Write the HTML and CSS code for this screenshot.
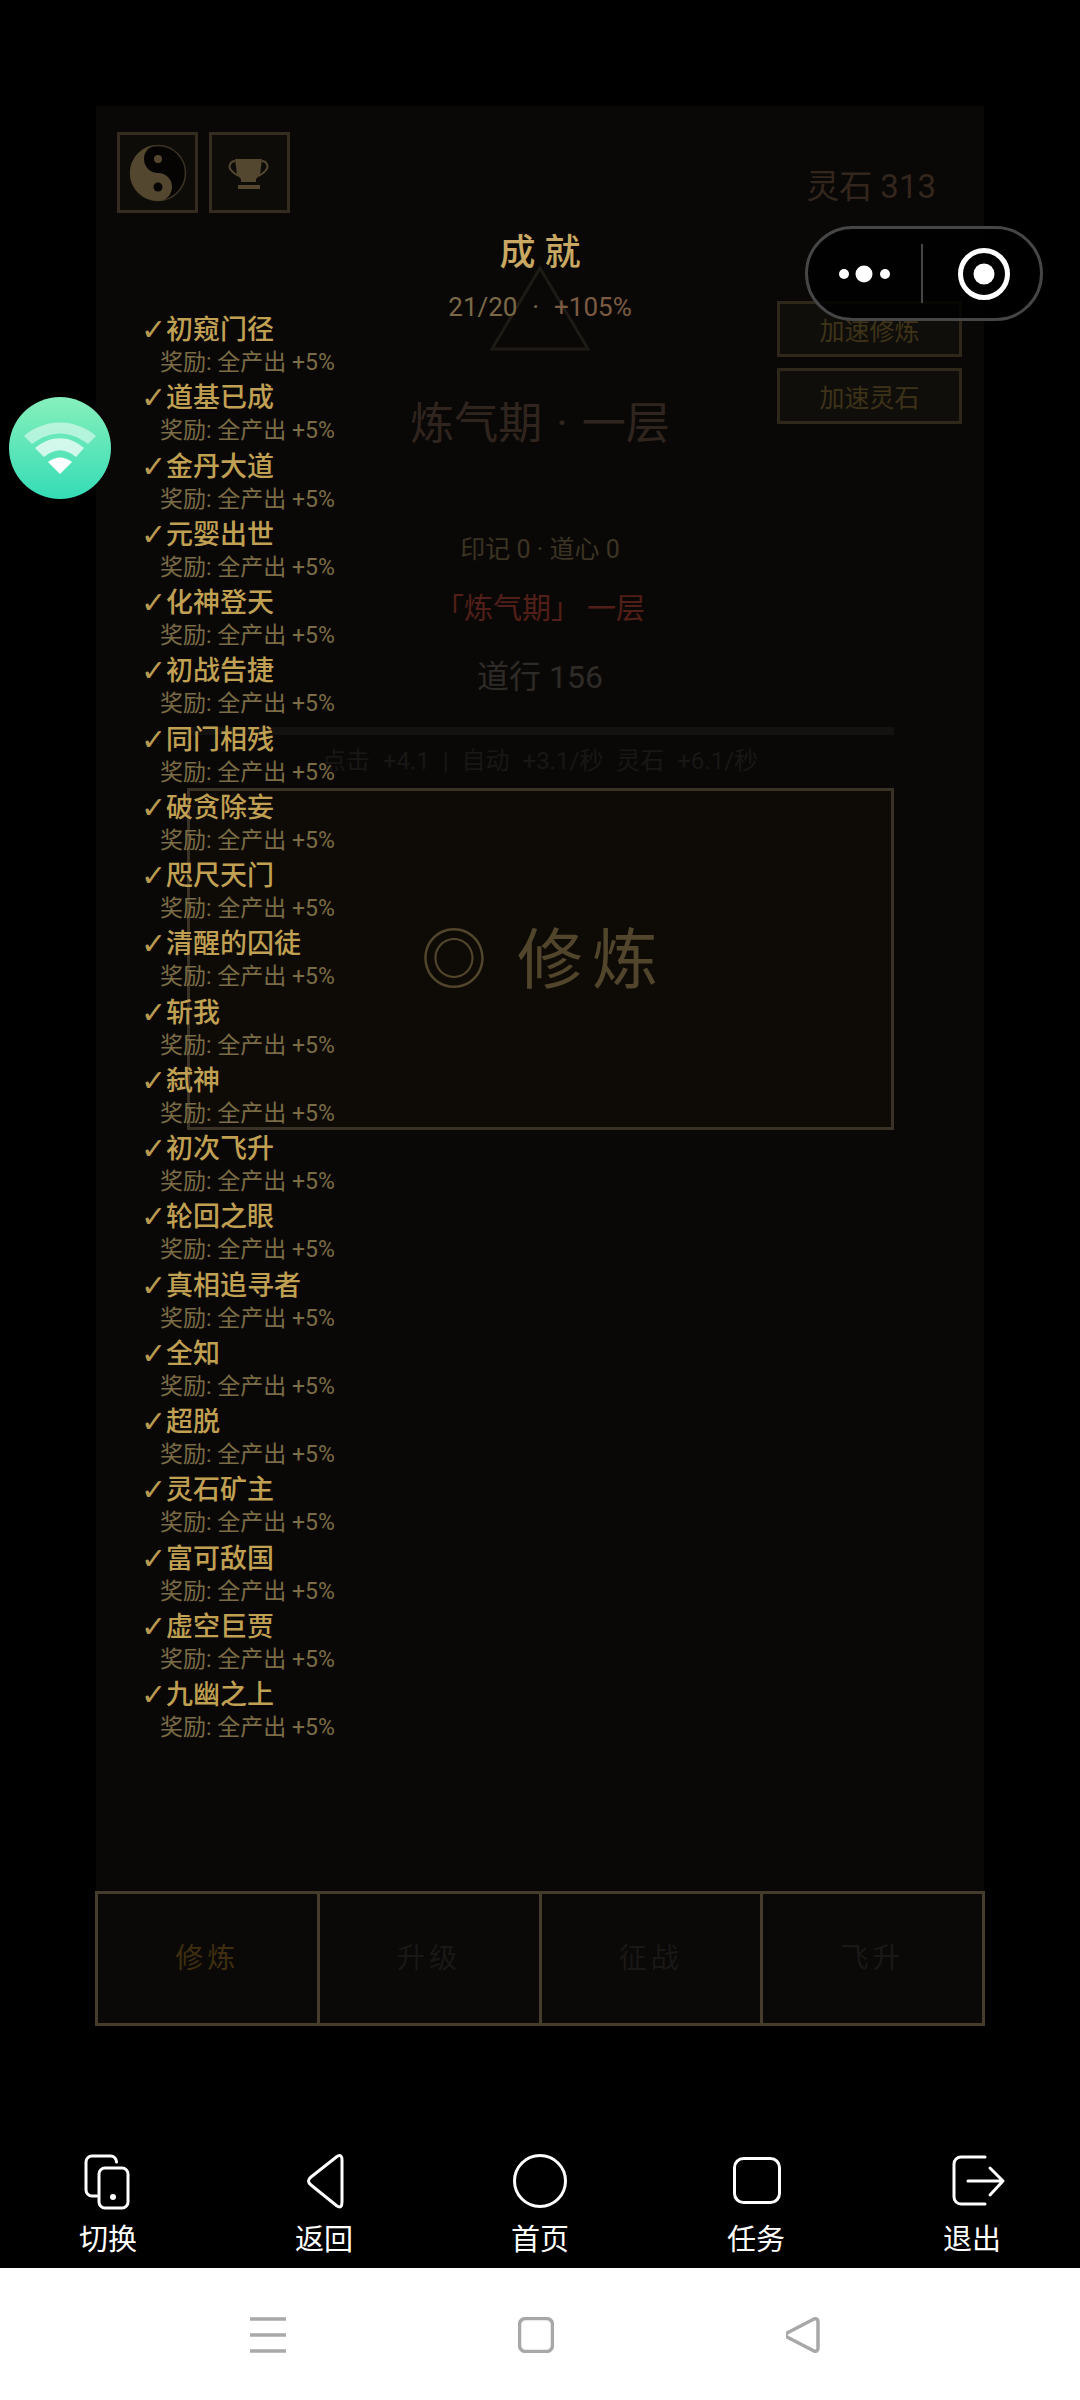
FILE: index.html
```html
<!DOCTYPE html>
<html lang="zh">
<head>
<meta charset="utf-8">
<title>修炼</title>
<link rel="stylesheet" href="styles.css">
</head>
<body>
<div class="screen">
  <main class="game">
    <section class="panel">
      <header class="topbar">
        <div class="tools">
          <div class="tool">
            <svg width="60" height="60" viewBox="-30 -30 60 60"><circle r="27.5" class="yy-ring"/><path class="yy-light" d="M0-28A28 28 0 0 0 0 28A14 14 0 0 0 0 0A14 14 0 0 1 0-28Z"/><circle cy="-14" r="4" class="yy-dot"/><circle cy="14" r="4.500" class="yy-hole"/></svg>
          </div>
          <div class="tool">
            <svg width="60" height="60" viewBox="0 0 60 60"><path class="cup-line" d="M15 18C10 18 8 24 11 27 13 30 16 31 18 33M42 18C47 18 49 24 46 27 44 30 41 31 39 33"/><path class="cup" d="M15 16H42L40 32 36 36V39H21V36L17 32Z"/><rect class="cup" x="18" y="42" width="22" height="4"/></svg>
          </div>
        </div>
        <div class="stone">灵石 313</div>
      </header>
      <div class="stage">
        <div class="hero">
          <svg class="tri" width="100" height="86" viewBox="0 0 100 86"><path d="M50 3 98 84H2Z"/></svg>
          <h1 class="realm">炼气期 · 一层</h1>
          <p class="marks">印记 0 · 道心 0</p>
          <p class="rank">「炼气期」 一层</p>
          <p class="dao">道行 156</p>
          <div class="bar"></div>
          <p class="rates">点击 +4.1 | 自动 +3.1/秒 灵石 +6.1/秒</p>
          <div class="cultivate"><span class="ring">◎</span><span>修炼</span></div>
        </div>
        <div class="boosts">
          <div class="boost">加速修炼</div>
          <div class="boost">加速灵石</div>
        </div>
      </div>
      <nav class="tabs">
        <div class="tab on">修炼</div>
        <div class="tab">升级</div>
        <div class="tab">征战</div>
        <div class="tab">飞升</div>
      </nav>
      <aside class="modal">
        <h2 class="m-title">成就</h2>
        <p class="m-sum"><span class="m-count">21/20</span>&nbsp; · &nbsp;<span class="m-plus">+105%</span></p>
        <ul class="ach">
          <li><b><i>✓</i>初窥门径</b><span>奖励: 全产出 +5%</span></li>
          <li><b><i>✓</i>道基已成</b><span>奖励: 全产出 +5%</span></li>
          <li><b><i>✓</i>金丹大道</b><span>奖励: 全产出 +5%</span></li>
          <li><b><i>✓</i>元婴出世</b><span>奖励: 全产出 +5%</span></li>
          <li><b><i>✓</i>化神登天</b><span>奖励: 全产出 +5%</span></li>
          <li><b><i>✓</i>初战告捷</b><span>奖励: 全产出 +5%</span></li>
          <li><b><i>✓</i>同门相残</b><span>奖励: 全产出 +5%</span></li>
          <li><b><i>✓</i>破贪除妄</b><span>奖励: 全产出 +5%</span></li>
          <li><b><i>✓</i>咫尺天门</b><span>奖励: 全产出 +5%</span></li>
          <li><b><i>✓</i>清醒的囚徒</b><span>奖励: 全产出 +5%</span></li>
          <li><b><i>✓</i>斩我</b><span>奖励: 全产出 +5%</span></li>
          <li><b><i>✓</i>弑神</b><span>奖励: 全产出 +5%</span></li>
          <li><b><i>✓</i>初次飞升</b><span>奖励: 全产出 +5%</span></li>
          <li><b><i>✓</i>轮回之眼</b><span>奖励: 全产出 +5%</span></li>
          <li><b><i>✓</i>真相追寻者</b><span>奖励: 全产出 +5%</span></li>
          <li><b><i>✓</i>全知</b><span>奖励: 全产出 +5%</span></li>
          <li><b><i>✓</i>超脱</b><span>奖励: 全产出 +5%</span></li>
          <li><b><i>✓</i>灵石矿主</b><span>奖励: 全产出 +5%</span></li>
          <li><b><i>✓</i>富可敌国</b><span>奖励: 全产出 +5%</span></li>
          <li><b><i>✓</i>虚空巨贾</b><span>奖励: 全产出 +5%</span></li>
          <li><b><i>✓</i>九幽之上</b><span>奖励: 全产出 +5%</span></li>
        </ul>
      </aside>
    </section>
    <div class="capsule">
      <svg width="238" height="95" viewBox="0 0 238 95"><rect x="1.500" y="1.500" width="235" height="92" rx="46" class="cap-shape"/><path class="cap-div" d="M117 18v59"/><circle cx="39" cy="48" r="5" class="cap-dot"/><circle cx="59" cy="48" r="8.500" class="cap-dot"/><circle cx="80" cy="48" r="5" class="cap-dot"/><circle cx="179" cy="48" r="23.500" class="cap-ring"/><circle cx="179" cy="48" r="10.500" class="cap-dot"/></svg>
    </div>
    <div class="wifi">
      <svg width="102" height="102" viewBox="0 0 102 102"><defs><linearGradient id="wg" x1="0" y1="0" x2="0" y2="1"><stop offset="0" stop-color="#86f0bb"/><stop offset="1" stop-color="#35dcb6"/></linearGradient></defs><circle cx="51" cy="51" r="51" fill="url(#wg)"/><path class="w1" d="M15 39C36 21 66 21 87 39L79 47C60 33 42 33 23 47Z"/><path class="w2" d="M26 51C42 38 60 38 75 51L67 60C56 51 46 51 35 60Z"/><path class="w3" d="M39 65C47 59 55 59 63 65L51 77Z"/></svg>
    </div>
  </main>
  <footer class="dock">
    <div class="dock-item">
      <svg width="60" height="60" viewBox="0 0 60 60"><path class="ic" d="M38.500 10V10a6 6 0 0 0-6-6H14a6 6 0 0 0-6 6v28a6 6 0 0 0 6 6h5"/><rect class="ic" x="21" y="16" width="29" height="40" rx="6"/><circle cx="35" cy="45" r="3" class="ic-fill"/></svg>
      <span>切换</span>
    </div>
    <div class="dock-item">
      <svg width="60" height="60" viewBox="0 0 60 60"><path class="ic" d="M43 4.500Q48 1.500 48 8V50Q48 57 43 54L17 33Q12 29 17 25Z"/></svg>
      <span>返回</span>
    </div>
    <div class="dock-item">
      <svg width="60" height="60" viewBox="0 0 60 60"><circle class="ic" cx="30" cy="29" r="25.500"/></svg>
      <span>首页</span>
    </div>
    <div class="dock-item">
      <svg width="60" height="60" viewBox="0 0 60 60"><rect class="ic" x="8.500" y="6.500" width="45" height="44" rx="9"/></svg>
      <span>任务</span>
    </div>
    <div class="dock-item">
      <svg class="dock-exit" width="60" height="60" viewBox="0 0 60 60"><path class="ic" d="M43 5H19a7 7 0 0 0-7 7V45a7 7 0 0 0 7 7H43M26 29H61M48 16 61 29 48 43"/></svg>
      <span>退出</span>
    </div>
  </footer>
  <div class="navbar">
    <svg width="36" height="36" viewBox="0 0 36 36"><path class="nv" d="M0 2H36M0 18H36M0 34H36"/></svg>
    <svg width="36" height="36" viewBox="0 0 36 36"><rect class="nv" x="1.500" y="1.500" width="33" height="33" rx="6"/></svg>
    <svg width="36" height="36" viewBox="0 0 36 36"><path class="nv" d="M28 2Q32 1 32 5V31Q32 35 28 34L1 20Q-1 18 1 16Z"/></svg>
  </div>
</div>
</body>
</html>
```
FILE: styles.css
```css
* { box-sizing: border-box; margin: 0; padding: 0; }
html, body { background: #000; }
body { font-family: Roboto, "Noto Sans CJK SC", sans-serif; }
svg { display: block; }

.screen { width: 1080px; height: 2400px; display: flex; flex-direction: column; overflow: hidden; }

.game { position: relative; height: 2144px; padding: 106px 96px 0; }
.panel { position: relative; height: 1920px; display: flex; flex-direction: column; background: #0a0807; }

.topbar { display: flex; justify-content: space-between; padding: 26px 48px 0 21px; height: 106px; flex: none; }
.tools { display: flex; gap: 11px; }
.tool { width: 81px; height: 81px; border: 3px solid #342c20; display: flex; align-items: center; justify-content: center; background: #0e0c09; }
.yy-ring { fill: #050403; stroke: #3c3325; stroke-width: 1.5; }
.yy-light { fill: #54472f; }
.yy-dot { fill: #54472f; }
.yy-hole { fill: #080604; }
.cup { fill: #54472f; }
.cup-line { fill: none; stroke: #54472f; stroke-width: 2; }
.stone { font-size: 33px; line-height: 44px; margin-top: 33px; color: #33261d; }

.stage { display: grid; flex: none; }
.hero, .boosts { grid-area: 1 / 1; }
.hero { display: flex; flex-direction: column; align-items: center; padding-top: 53px; }
.tri { flex: none; }
.tri path { fill: none; stroke: #1e1b16; stroke-width: 3; }
.realm { margin-top: 43px; font-size: 44px; line-height: 60px; font-weight: 400; color: #30251e; word-spacing: 3px; }
.marks { margin-top: 80px; font-size: 25px; line-height: 32px; color: #3c3423; }
.rank { margin-top: 25px; font-size: 29px; line-height: 36px; color: #521f18; }
.dao { margin-top: 30px; font-size: 32px; line-height: 40px; color: #2e2b27; }
.bar { margin-top: 30px; width: 707px; height: 8px; background: #131210; }
.rates { margin-top: 11px; font-size: 24px; line-height: 30px; color: #191715; word-spacing: 7px; }
.cultivate { margin-top: 12px; width: 707px; height: 342px; padding: 0 0 10px 8px; border: 3px solid #3a3226; background: #0e0b07; display: flex; align-items: center; justify-content: center; gap: 30px; font-size: 66px; letter-spacing: 9px; color: #51452b; }
.ring { letter-spacing: 0; }

.boosts { justify-self: end; margin: 89px 22px 0 0; display: flex; flex-direction: column; gap: 11px; }
.boost { width: 185px; height: 56px; border: 3px solid #2f281a; background: #100e0b; display: flex; align-items: center; justify-content: center; font-size: 25px; color: #3e3318; }

.tabs { margin: auto -1px 0; height: 135px; flex: none; display: grid; grid-template-columns: repeat(4, 1fr); border: solid #453c2c; border-width: 3px 0 3px 3px; }
.tab { display: flex; align-items: center; justify-content: center; padding-bottom: 5px; font-size: 28px; letter-spacing: 4px; color: #1a1816; background: #0a0908; border-right: 3px solid #453c2c; }
.tab.on { color: #3f2f10; }

.modal { position: absolute; inset: 0; padding-top: 125px; display: flex; flex-direction: column; align-items: center; }
.m-title { font-size: 36px; line-height: 44px; font-weight: 500; letter-spacing: 9px; color: #c8a862; padding-left: 9px; }
.m-sum { margin-top: 25px; font-size: 26px; line-height: 15px; color: #7a6846; word-spacing: 1px; }
.m-plus { color: #7b5b42; }
.ach { list-style: none; align-self: flex-start; margin-left: 45px; }
.ach li { display: flex; flex-direction: column; height: 68.25px; }
.ach b { font-size: 27px; line-height: 30px; font-weight: 500; color: #c0a052; display: flex; }
.ach i { font-style: normal; font-family: "DejaVu Sans", sans-serif; width: 25px; color: #b89a50; font-size: 30px; line-height: 30px; }
.ach span { margin: 1px 0 0 19px; font-size: 23px; line-height: 34px; color: #7a6c45; }

.capsule { position: absolute; left: 805px; top: 226px; }
.cap-shape { fill: rgba(0,0,0,.82); stroke: #464646; stroke-width: 3; }
.cap-div { stroke: #464646; stroke-width: 2; }
.cap-dot { fill: #fff; }
.cap-ring { fill: none; stroke: #fff; stroke-width: 5; }

.wifi { position: absolute; left: 9px; top: 397px; }
.w1 { fill: #fff; opacity: .5; }
.w2 { fill: #fff; opacity: .72; }
.w3 { fill: #fff; }

.dock { flex: none; height: 124px; display: flex; background: #000; }
.dock-item { width: 216px; display: flex; flex-direction: column; align-items: center; padding-top: 8px; color: #fff; }
.dock-item span { font-size: 29px; line-height: 36px; margin-top: 10px; }
.dock-exit { overflow: visible; }
.ic { fill: none; stroke: #fff; stroke-width: 3; stroke-linejoin: round; stroke-linecap: round; }
.ic-fill { fill: #fff; }

.navbar { flex: none; height: 132px; background: #fff; display: flex; padding: 49px 0 0 250px; gap: 232px; }
.nv { fill: none; stroke: #a8a8a8; stroke-width: 3.500; stroke-linejoin: round; }
```
